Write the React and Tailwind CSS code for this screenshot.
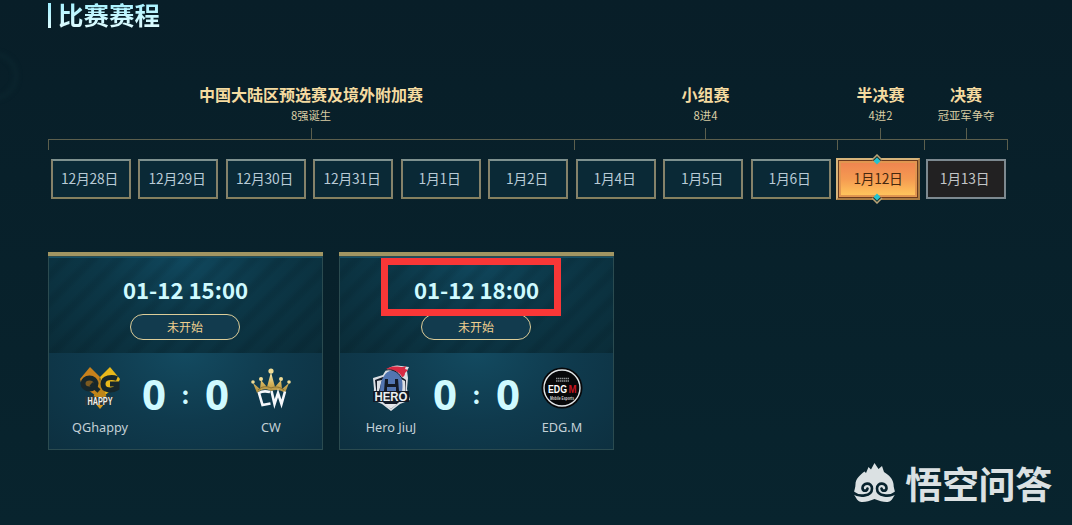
import React from 'react';

const STAGES = [
  { name: '中国大陆区预选赛及境外附加赛', note: '8强诞生' },
  { name: '小组赛', note: '8进4' },
  { name: '半决赛', note: '4进2' },
  { name: '决赛', note: '冠亚军争夺' },
];

const DATES = [
  '12月28日', '12月29日', '12月30日', '12月31日', '1月1日', '1月2日',
  '1月4日', '1月5日', '1月6日', '1月12日', '1月13日',
];

const ACTIVE_DATE = '1月12日';
const LAST_DATE = '1月13日';

const QGLogo = () => (
  <svg width="44" height="44" viewBox="0 0 44 44">
    <path d="M2 13 12 1l10 10L17 29 4 20z" fill="#c8811c" />
    <path d="M42 13 32 1 22 11l5 18 12-9z" fill="#e9b91b" />
    <path d="M12 31h20l-10 12z" fill="#d99a1c" />
    <path d="M22 12 29 32H15z" fill="#bd8519" />
    <ellipse cx="11.5" cy="17.5" rx="6.5" ry="5.5" fill="#7c5a20" stroke="#17272b" strokeWidth="5" />
    <path d="M13 18l8 7" stroke="#17272b" strokeWidth="4.5" />
    <path d="M39 12.500c-5-2-14-1.500-14 5.500 0 7 9 7 14 4v-4h-7" fill="none" stroke="#17272b" strokeWidth="5" />
    <path d="M7 30l6 2-2-3 7 2h8l7-2-2 3 6-2-5 8-9 1-10-1-6 2z" fill="#26353a" />
    <text x="22" y="38.5" textAnchor="middle" fontSize="10" fontWeight="900" textLength="25" lengthAdjust="spacingAndGlyphs" fill="#f1efe9" fontFamily="Liberation Sans, sans-serif">HAPPY</text>
  </svg>
);

const CWLogo = () => (
  <svg width="44" height="44" viewBox="0 0 44 44">
    <defs>
      <linearGradient id="crown" x1="0" y1="0" x2="0" y2="1">
        <stop offset="0" stopColor="#fff3ba" />
        <stop offset=".55" stopColor="#d4b25a" />
        <stop offset="1" stopColor="#a5873c" />
      </linearGradient>
    </defs>
    <path d="M8 27 4 17l7 6 1-9 6 7 4-15 4 15 6-7 1 9 7-6-4 10c-4-3-9-4-14-2-5-3-10-2-14 2z" fill="url(#crown)" />
    <path d="M9 24c4-4 9-4 13-2 5-2 9-1 13 2" fill="none" stroke="#7d6428" strokeWidth=".8" />
    <g fill="#f1dd96">
      <circle cx="22" cy="5" r="2.6" />
      <circle cx="12" cy="13" r="2" />
      <circle cx="32" cy="13" r="2" />
      <circle cx="4" cy="16" r="1.8" />
      <circle cx="40" cy="16" r="1.8" />
    </g>
    <g fill="none" stroke="#f6f8fb" strokeWidth="2.6">
      <path d="M21 26c-4-1-8-1-11 1l3.500 12 8-1.500" />
      <path d="M22.500 25l3 13L29 27l3.500 11L36 25.500" />
    </g>
  </svg>
);

const HeroLogo = () => (
  <svg width="44" height="48" viewBox="0 0 44 48">
    <path d="M4 14l10-3C17 4 25 0 32 2l8 1-2 4 1 7-1 11 3 11-10 4-9 7-9-7-9-4 1-11z" fill="#dcdfe4" />
    <path d="M6 16l8-3 17-1 6 4-1 17-14 12L8 33z" fill="#141b28" />
    <path d="M8 17l5-1-3 11H8zM32 15l4 2v10h-3z" fill="#dcdfe4" />
    <path d="M15 12c3-6 11-7 15-2 4 4 4 12 3 18H11c0-6 1-12 4-16z" fill="#5275b1" />
    <path d="M17 5c7-4 13-2 17-2l3-1-1 3 3 1-3 3c0 2-1 4-3 4-2-5-8-7-16-8z" fill="#d92a43" />
    <path d="M17 6c7-1 12 2 15 7" fill="none" stroke="#131a26" strokeWidth="1" />
    <path d="M16 15h3v5h7v-5h3l1 12h-3v-4h-9v4h-3z" fill="#131a26" />
    <path d="M4 27h36v11H4z" fill="#131a26" />
    <text x="22" y="37" textAnchor="middle" fontSize="12.5" fontWeight="900" textLength="33" lengthAdjust="spacingAndGlyphs" fill="#edf0f2" fontFamily="Liberation Sans, sans-serif">HERO</text>
    <path d="M15 40h13l-6 5z" fill="#e4e6ea" />
  </svg>
);

const EDGLogo = () => (
  <svg width="42" height="42" viewBox="0 0 42 42" fontFamily="Liberation Sans, sans-serif">
    <circle cx="21" cy="21" r="20.5" fill="#07080a" />
    <circle cx="21" cy="21" r="18" fill="none" stroke="#e2e6e8" strokeWidth="1.4" />
    <path d="M15 11.5h13M15 14h13" stroke="#8b8f91" strokeWidth="1.3" strokeDasharray="1.5 .5" />
    <text x="7" y="25.5" fontSize="10.5" fontWeight="900" textLength="19" lengthAdjust="spacingAndGlyphs" fill="#fff">EDG</text>
    <text x="27.5" y="25.5" fontSize="10.5" fontWeight="900" textLength="8" lengthAdjust="spacingAndGlyphs" fill="#c4151f">M</text>
    <text x="21" y="32.500" textAnchor="middle" fontSize="4.5" fontWeight="700" textLength="24" lengthAdjust="spacingAndGlyphs" fill="#d5d8da">Mobile Esports</text>
  </svg>
);

const WukongLogo = () => (
  <svg width="44" height="42" viewBox="0 0 44 42">
    <path d="M21.500 1l4 6 3.500-3 2 6c5 3 9 7 9.500 12 0 4 1.500 6 1.500 9 0 2-1 3-1.500 4-2 4-4 5-7 5-4 0-7-1-12-3-5 2-8 3-12 3-3 0-5-1-7-5-.500-1-1.500-2-1.500-4 0-3 1.500-5 1.500-9C2.500 17 7 13 11.500 9.500L13 11l2.500-6L18 7.500z" fill="#dbe1e3" />
    <g fill="none" stroke="#08232e" strokeWidth="2.6" strokeLinecap="round">
      <path d="M0 30.500c6 5 19 4 19-4 0-7-10-6-9.500 0 .5 3 4.500 3 5 0" />
      <path d="M43 30.500c-6 5-19 4-19-4 0-7 10-6 9.500 0-.5 3-4.500 3-5 0" />
    </g>
  </svg>
);

const MATCHES = [
  {
    time: '01-12 15:00',
    home: { name: 'QGhappy', Logo: QGLogo },
    away: { name: 'CW', Logo: CWLogo },
  },
  {
    time: '01-12 18:00',
    marked: true,
    home: { name: 'Hero JiuJ', Logo: HeroLogo },
    away: { name: 'EDG.M', Logo: EDGLogo },
  },
];

const Stage = ({ name, note }) => (
  <div className="flex flex-col items-center whitespace-nowrap">
    <h3 className="h-6 text-base leading-[23px] font-bold text-[#f5dba0]">{name}</h3>
    <p className="h-4 text-[11.3px] leading-4 text-[#d9cda3]">{note}</p>
    <div className="mt-[5px] h-[11px] w-px bg-[#5c5f4d]" />
    <div className="h-[11px] w-full border-t border-l border-[#5c5f4d]" />
  </div>
);

// ornament on the top and bottom edge of the selected date
const Gem = ({ className }) => (
  <svg width="12" height="11" viewBox="0 0 12 11" className={className}>
    <path d="M1 6l5-5 5 5" fill="#17302f" stroke="#b9a477" strokeWidth="1.5" />
    <path d="M6 3.500l3.500 3.500L6 10.500 2.500 7z" fill="#25c2d0" />
  </svg>
);

const DateButton = ({ label }) => {
  if (label === ACTIVE_DATE) {
    return (
      <button className="relative -mx-[2px] flex h-[42px] w-[84px] shrink-0 items-center justify-center border-2 border-t-[#d6b47b] border-r-[#a97b43] border-b-[#a97b43] border-l-[#d6b47b] bg-[#6b3a1e] p-px text-[13.8px] text-[#45280f]">
        <span className="flex h-full w-full items-center justify-center border-2 border-[#e19650] bg-linear-to-b from-[#ef8550] via-[#f59a51] to-[#ffc45c] pb-px tracking-[-0.3px]">
          {label}
        </span>
        <Gem className="absolute -top-[6px] left-[33px]" />
        <Gem className="absolute -bottom-[6px] left-[33px] rotate-180" />
      </button>
    );
  }
  if (label === LAST_DATE) {
    return (
      <button className="h-10 w-20 shrink-0 border-2 border-[#7d8990] bg-[#222122] pr-[2px] pb-[2px] text-[13.8px] tracking-[-0.2px] text-[#c4c6c8]">
        {label}
      </button>
    );
  }
  return (
    <button className="h-10 w-20 shrink-0 border-2 border-t-[#7e918f] border-r-[#85826a] border-b-[#85805f] border-l-[#85826a] bg-[#0a2936] pr-[2px] pb-[2px] text-[13.8px] tracking-[-0.2px] text-[#b9cbd6]">
      {label}
    </button>
  );
};

const Team = ({ name, Logo }) => (
  <div className="flex w-20 flex-col items-center">
    <div className="flex h-12 items-center justify-center">
      <Logo />
    </div>
    <p className="mt-[5px] font-['Noto_Sans'] text-[12.7px] leading-5 whitespace-nowrap text-[#c3d0d6]">{name}</p>
  </div>
);

const MatchCard = ({ time, marked, home, away }) => (
  <div className="h-[198px] w-[275px] border-t-4 border-[#a19562]">
    <div className="flex h-full flex-col border border-[#2b4b50]">
      <div className="flex h-24 flex-col items-center border-t border-[#145169] bg-[repeating-linear-gradient(135deg,transparent_0_6px,rgba(0,15,22,0.11)_11px_14px,transparent_19px),radial-gradient(ellipse_at_50%_0%,#10485e_0%,#0c3747_45%,#0a2c38_100%)] pr-px">
        <div className="relative mt-[15px] ml-px h-8 text-[22.2px] leading-8 font-bold text-[#cffaff]">
          {time}
          {marked && <div className="absolute -top-[15px] -left-[33px] z-10 h-[58px] w-[180px] border-[7px] border-[#f93737]" />}
        </div>
        <span className="mt-[9px] flex h-[26px] w-[110px] items-center justify-center rounded-full border border-[#dccd99] bg-[#123b4e] pb-px text-[12px] text-[#f0d08f]">
          未开始
        </span>
      </div>
      <div className="flex flex-1 items-start bg-[radial-gradient(ellipse_at_50%_0%,#134a60_0%,#0f3a4d_50%,#0d3040_100%)] px-[11px] pt-[11px]">
        <Team {...home} />
        <div className="mt-[2px] flex h-14 flex-1 items-center justify-center text-[#cffaff]">
          <span className="font-['Noto_Sans'] text-[42px] leading-none font-bold">0</span>
          <span className="w-[39px] text-center text-[24px] leading-none font-bold">:</span>
          <span className="font-['Noto_Sans'] text-[42px] leading-none font-bold">0</span>
        </div>
        <Team {...away} />
      </div>
    </div>
  </div>
);

export default function App() {
  return (
    <div className="relative flex h-[525px] w-[1072px] flex-col overflow-hidden bg-linear-to-b from-[#081e28] to-[#08242e] pl-12 font-['Noto_Sans_CJK_SC',sans-serif]">
      <div className="absolute top-[52px] -left-[30px] h-12 w-12 rounded-full border-4 border-[#0b252e] blur-[2px]" />
      <div className="flex h-[30px] items-start">
        <div className="mt-[3px] h-[25px] w-[3px] bg-linear-to-b from-[#9eefff] to-[#dcfbff]" />
        <h2 className="-mt-[6px] ml-[7px] h-10 bg-linear-to-b from-[#8eeeff] to-[#edfeff] bg-clip-text text-[25.5px] leading-10 font-bold text-transparent">
          比赛赛程
        </h2>
      </div>

      {/* stages and dates */}
      <div className="mt-[53px] grid w-[960px] grid-cols-[526px_263px_87px_84px] border-r border-transparent">
        {STAGES.map((s) => <Stage key={s.name} {...s} />)}
      </div>
      <div className="-mt-[11px] ml-[959px] h-[11px] w-px bg-[#5c5f4d]" />
      <div className="mt-2 flex h-[42px] items-center gap-[7.5px] pl-[2.5px]">
        {DATES.map((d) => <DateButton key={d} label={d} />)}
      </div>

      {/* matches */}
      <div className="mt-[52px] flex gap-4">
        {MATCHES.map((m) => <MatchCard key={m.time} {...m} />)}
      </div>

      <div className="absolute right-[20px] bottom-[20px] flex items-center gap-2 text-[#dbe1e3]">
        <WukongLogo />
        <span className="text-[37px] leading-[44px] font-bold tracking-[-0.3px]">悟空问答</span>
      </div>
    </div>
  );
}
